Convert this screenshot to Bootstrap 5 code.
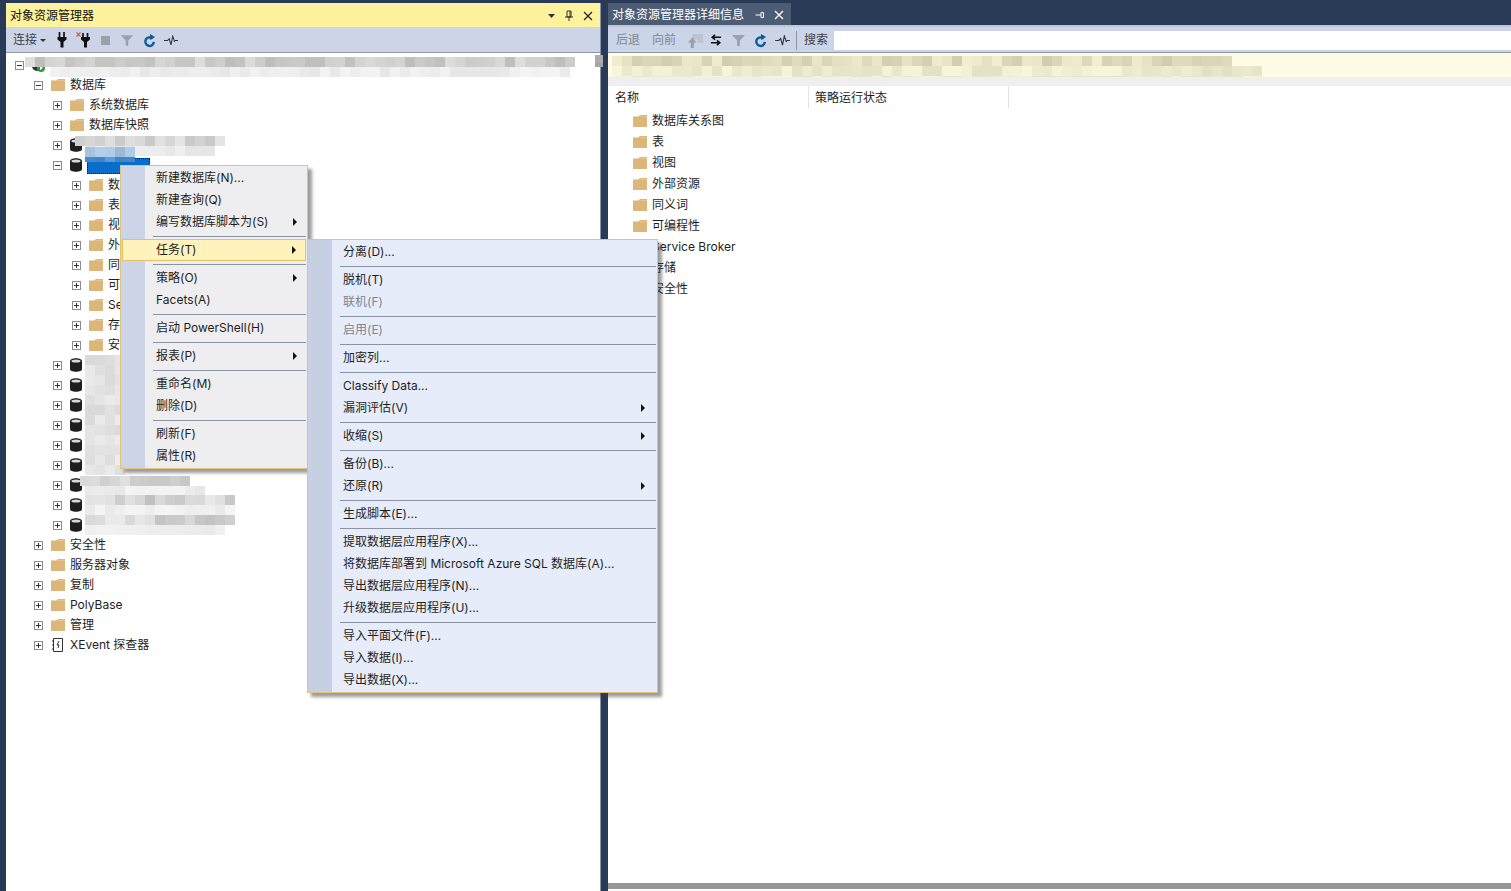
<!DOCTYPE html>
<html lang="zh-CN">
<head>
<meta charset="utf-8">
<title>对象资源管理器</title>
<link href="https://cdn.jsdelivr.net/npm/bootstrap@5.3.0/dist/css/bootstrap.min.css" rel="stylesheet">
<style>
html,body{height:100%;overflow:hidden}
body{background:#293a56;font:12px/20px "Inter","Noto Sans CJK SC",sans-serif;color:#1e1e1e;padding:3px 0 0 6px;position:relative}
.shell{height:888px;display:flex}
.pane-left{width:595px;flex:none;display:flex;flex-direction:column;background:#fff;border-right:1px solid #8a93a3}
.pane-right{margin-left:7px;flex:1;min-width:0;display:flex;flex-direction:column;background:#fff}
.title-yellow{height:24px;background:#fff29d;padding:2px 7px 0 4px;color:#111;flex:none}
.tabstrip{height:22px;display:flex;background:#293a56;flex:none}
.tab-active{width:183px;height:22px;background:#4b5c74;color:#fff;padding:2px 7px 0 4px;display:flex;align-items:center}
.tabgap{height:2px;background:#bcc7dc;flex:none}
.toolrow{height:26px;background:#ccd5e7;flex:none;border-bottom:1px solid #8f98a8;display:flex;align-items:center;padding-top:1px;padding-left:8px}
.toolrow-left{padding-left:7px}
.tool-txt{color:#3a3f4a}
.tool-off{color:#7d8694}
.caret-s{width:0;height:0;border:3px solid transparent;border-top-color:#333;border-bottom:0;margin-left:3px}
.tree{flex:1;padding-top:2px;overflow:hidden}
.tnode{height:20px;display:flex;align-items:center;white-space:nowrap}
.lv0{padding-left:9px}.lv1{padding-left:28px}.lv2{padding-left:47px}.lv3{padding-left:66px}
.xbox{width:9px;height:9px;flex:none;margin-right:8px;margin-top:1px}
.ic16{width:14px;height:14px;flex:none;margin-right:5px}
.lbl{line-height:20px}
.sel-name{width:63px;height:16px;background:#0a6ccb;outline:1px dotted #111;outline-offset:-1px;margin-left:-2px;margin-top:1px}
.notice-strip{height:24px;background:#fffbe4;flex:none}
.greygap{height:9px;background:#efeff2;flex:none}
.colhead{height:22px;flex:none;display:flex;margin-left:1px}
.colhead div{width:200px;padding:2px 6px 0;border-right:1px solid #e3e3e3}
.det-list{flex:1;padding-left:25px;padding-top:2px;overflow:hidden}
.det-row{height:21px;display:flex;align-items:center}
.hbar{height:6px;background:#979797;flex:none}
.hbar-end{height:2px;flex:none;background:#fff}
.search-box{height:19px;flex:1;border:0;border-radius:0;padding:0;min-height:0;background:#fff;margin-left:6px}
.vline{width:1px;height:19px;background:#8f98a8;margin:0 7px 0 6px}
.lt-plug{width:10px;height:16px;margin-left:11px}
.lt-unplug{width:14px;height:16px;margin-left:9px}
.lt-stop{width:9px;height:9px;margin-left:11px}
.lt-funnel{width:12px;height:13px;margin-left:11px}
.lt-refresh{width:13px;height:15px;margin-left:10px}
.lt-pulse{width:14px;height:11px;margin-left:8px}
.rt-next{margin-left:12px}
.rt-up{width:15px;height:15px;margin-left:12px}
.rt-swap{width:12px;height:12px;margin-left:7px}
.rt-funnel{width:13px;height:13px;margin-left:10px}
.rt-refresh{width:13px;height:15px;margin-left:9px}
.rt-pulse{width:15px;height:11px;margin-left:8px}
.ttl-tri{width:7px;height:4px}
.ttl-pin{width:10px;height:12px;margin-left:9px}
.ttl-x{width:10px;height:10px;margin-left:9px}
.tab-pin{width:10px;height:10px;margin-right:9px}
.tab-x{width:10px;height:10px;margin-right:0}
/* menus lie above the tree */
.ctx{--bs-dropdown-padding-y:0;position:absolute;margin:0;padding:0;border:1px solid #e3c27a;border-radius:0;box-shadow:4px 4px 3px rgba(60,60,60,.5);font-size:12px;z-index:20;min-width:0}
.ctx-a{left:120px;top:165px;width:188px;padding:1px 0;background:linear-gradient(90deg,#ccd5e7 24px,#eeeef0 24px)}
.ctx-b{left:307px;top:239px;width:351px;padding:1px 0;background:linear-gradient(90deg,#c7d0e3 24px,#e6ecfa 24px);z-index:21}
.ctx .dropdown-item{height:22px;line-height:21px;padding:0 0 0 35px;color:#1e1e1e;position:relative;background:none;border:0}
.ctx .dropdown-item.is-off{color:#7f8590}
.ctx .dropdown-item.is-hot{background:#fff2bb;outline:1px solid #e5c365;outline-offset:-1px;margin:0 1px;padding-left:34px;width:auto}
.ctx .sub::after{content:"";position:absolute;top:7px;border-left:4px solid #111;border-top:4px solid transparent;border-bottom:4px solid transparent}
.ctx-a .sub::after{right:10px}
.ctx-b .sub::after{right:12px}
.ctx .dropdown-divider{margin:0;height:6px;border:0;position:relative;opacity:1}
.ctx .dropdown-divider::after{content:"";position:absolute;top:3px;left:32px;right:1px;height:1px;background:#8a93a3}
.mosaic-patch{position:absolute;display:grid;z-index:5;filter:blur(.7px)}
.mosaic-patch i{display:block}
</style>
</head>
<body>
<svg width="0" height="0" class="position-absolute">
<defs>
<symbol id="folder" viewBox="0 0 14 14"><path d="M0 2.500h5l2-1.500h7v12H0z" fill="#dcb67a"/><path d="M0 3h5.500L7 2h7v1H0z" fill="#e6c58f"/></symbol>
<symbol id="dbcyl" viewBox="0 0 14 14"><path d="M0 3v8c0 1.700 2.700 2.800 6 2.800s6-1.100 6-2.800V3C12 1.300 9.300.2 6 .2S0 1.300 0 3z" fill="#1e1e1e"/><ellipse cx="6" cy="3" rx="4.600" ry="1.600" fill="#d9d9d9"/></symbol>
<symbol id="plus" viewBox="0 0 9 9"><rect x=".5" y=".5" width="8" height="8" fill="#fff" stroke="#8c8c8c"/><path d="M2 4.500h5M4.500 2v5" stroke="#333"/></symbol>
<symbol id="minus" viewBox="0 0 9 9"><rect x=".5" y=".5" width="8" height="8" fill="#fff" stroke="#8c8c8c"/><path d="M2 4.500h5" stroke="#333"/></symbol>
<symbol id="xev" viewBox="0 0 14 14"><path d="M2.500 .5h9v13h-9z" fill="#fff" stroke="#333"/><path d="M1 3h2M1 7h2M1 11h2" stroke="#333"/><path d="M8 3 6 7h2l-1 3" fill="none" stroke="#333"/></symbol>
<symbol id="plug" viewBox="0 0 10 16"><path d="M2.500 0v5M7 0v5" stroke="#111" stroke-width="1.700"/><path d="M.5 5h9v2.500l-3 2.500v5.500h-3V10l-3-2.500z" fill="#111"/></symbol>
<symbol id="unplug" viewBox="0 0 14 16"><path d="M.5 .5l4 4M4.500 .5l-4 4" stroke="#d9534f" stroke-width="1.100"/><path d="M7 1v4M11.500 1v4" stroke="#111" stroke-width="1.700"/><path d="M5 5h9v2.500L11 10v5.500H8V10L5 7.500z" fill="#111"/></symbol>
<symbol id="funnel" viewBox="0 0 14 14"><path d="M0 1h14L8.500 7v6h-3V7z" fill="#9aa1ac"/></symbol>
<symbol id="refresh" viewBox="0 0 14 15"><path d="M10.300 5.400A4.600 4.600 0 1 0 11.700 9" fill="none" stroke="#0e5a9c" stroke-width="2.600"/><path d="M7.500 .5v6.500l5.500-3.200z" fill="#0e5a9c"/></symbol>
<symbol id="pulse" viewBox="0 0 16 12"><path d="M0 6h4l2-2 2 7 2-10 2 6 1-1h3" fill="none" stroke="#333" stroke-width="1.200"/></symbol>
<symbol id="swap" viewBox="0 0 13 12"><path d="M12 3H3M5.500 .5 2.500 3l3 2.500M1 9h9M7.500 6.500l3 2.500-3 2.500" fill="none" stroke="#111" stroke-width="1.800"/></symbol>
<symbol id="uparrow" viewBox="0 0 14 14"><path d="M4 1h10v8H9V6H4z" fill="#bcc3ce"/><path d="M4 4 0 9h2.500v5h3V9H8z" fill="#9aa1ac"/></symbol>
<symbol id="pin" viewBox="0 0 10 10"><path d="M2 5h4M6 2.500v5h2.500v-5zM.5 5H2" fill="none" stroke="#fff"/></symbol>
<symbol id="pin-v" viewBox="0 0 10 12"><path d="M3 1h4v6H3zM1 7h8M5 7v4M6 1v6" fill="none" stroke="#333"/></symbol>
<symbol id="xmark" viewBox="0 0 10 10"><path d="M1 1l8 8M9 1 1 9" stroke="currentColor" stroke-width="1.300" fill="none"/></symbol>
</defs>
</svg>

<div class="shell">
  <section class="pane-left">
    <div class="title-yellow d-flex align-items-center">
      <span class="flex-grow-1">对象资源管理器</span>
      <svg class="ttl-tri" viewBox="0 0 7 4"><path d="M0 0h7L3.500 4z" fill="#333"/></svg>
      <svg class="ttl-pin"><use href="#pin-v"/></svg>
      <svg class="ttl-x text-dark"><use href="#xmark"/></svg>
    </div>
    <div class="toolrow toolrow-left">
      <span class="tool-txt">连接</span><span class="caret-s"></span>
      <svg class="lt-plug"><use href="#plug"/></svg>
      <svg class="lt-unplug"><use href="#unplug"/></svg>
      <svg class="lt-stop"><rect width="9" height="9" fill="#9aa1ac"/></svg>
      <svg class="lt-funnel"><use href="#funnel"/></svg>
      <svg class="lt-refresh"><use href="#refresh"/></svg>
      <svg class="lt-pulse"><use href="#pulse"/></svg>
    </div>
    <div class="tree">
      <div class="tnode lv0"><svg class="xbox"><use href="#minus"/></svg><svg class="ic16" viewBox="0 0 14 14"><ellipse cx="5" cy="8" rx="5" ry="5" fill="#333"/><circle cx="9" cy="10" r="4" fill="#2e9a3a"/><path d="M8 8v4l3-2z" fill="#fff"/></svg></div>
      <div class="tnode lv1"><svg class="xbox"><use href="#minus"/></svg><svg class="ic16"><use href="#folder"/></svg><span class="lbl">数据库</span></div>
      <div class="tnode lv2"><svg class="xbox"><use href="#plus"/></svg><svg class="ic16"><use href="#folder"/></svg><span class="lbl">系统数据库</span></div>
      <div class="tnode lv2"><svg class="xbox"><use href="#plus"/></svg><svg class="ic16"><use href="#folder"/></svg><span class="lbl">数据库快照</span></div>
      <div class="tnode lv2"><svg class="xbox"><use href="#plus"/></svg><svg class="ic16"><use href="#dbcyl"/></svg></div>
      <div class="tnode lv2"><svg class="xbox"><use href="#minus"/></svg><svg class="ic16"><use href="#dbcyl"/></svg><span class="sel-name"></span></div>
      <div class="tnode lv3"><svg class="xbox"><use href="#plus"/></svg><svg class="ic16"><use href="#folder"/></svg><span class="lbl">数据库关系图</span></div>
      <div class="tnode lv3"><svg class="xbox"><use href="#plus"/></svg><svg class="ic16"><use href="#folder"/></svg><span class="lbl">表</span></div>
      <div class="tnode lv3"><svg class="xbox"><use href="#plus"/></svg><svg class="ic16"><use href="#folder"/></svg><span class="lbl">视图</span></div>
      <div class="tnode lv3"><svg class="xbox"><use href="#plus"/></svg><svg class="ic16"><use href="#folder"/></svg><span class="lbl">外部资源</span></div>
      <div class="tnode lv3"><svg class="xbox"><use href="#plus"/></svg><svg class="ic16"><use href="#folder"/></svg><span class="lbl">同义词</span></div>
      <div class="tnode lv3"><svg class="xbox"><use href="#plus"/></svg><svg class="ic16"><use href="#folder"/></svg><span class="lbl">可编程性</span></div>
      <div class="tnode lv3"><svg class="xbox"><use href="#plus"/></svg><svg class="ic16"><use href="#folder"/></svg><span class="lbl">Service Broker</span></div>
      <div class="tnode lv3"><svg class="xbox"><use href="#plus"/></svg><svg class="ic16"><use href="#folder"/></svg><span class="lbl">存储</span></div>
      <div class="tnode lv3"><svg class="xbox"><use href="#plus"/></svg><svg class="ic16"><use href="#folder"/></svg><span class="lbl">安全性</span></div>
      <div class="tnode lv2"><svg class="xbox"><use href="#plus"/></svg><svg class="ic16"><use href="#dbcyl"/></svg></div>
      <div class="tnode lv2"><svg class="xbox"><use href="#plus"/></svg><svg class="ic16"><use href="#dbcyl"/></svg></div>
      <div class="tnode lv2"><svg class="xbox"><use href="#plus"/></svg><svg class="ic16"><use href="#dbcyl"/></svg></div>
      <div class="tnode lv2"><svg class="xbox"><use href="#plus"/></svg><svg class="ic16"><use href="#dbcyl"/></svg></div>
      <div class="tnode lv2"><svg class="xbox"><use href="#plus"/></svg><svg class="ic16"><use href="#dbcyl"/></svg></div>
      <div class="tnode lv2"><svg class="xbox"><use href="#plus"/></svg><svg class="ic16"><use href="#dbcyl"/></svg></div>
      <div class="tnode lv2"><svg class="xbox"><use href="#plus"/></svg><svg class="ic16"><use href="#dbcyl"/></svg></div>
      <div class="tnode lv2"><svg class="xbox"><use href="#plus"/></svg><svg class="ic16"><use href="#dbcyl"/></svg></div>
      <div class="tnode lv2"><svg class="xbox"><use href="#plus"/></svg><svg class="ic16"><use href="#dbcyl"/></svg></div>
      <div class="tnode lv1"><svg class="xbox"><use href="#plus"/></svg><svg class="ic16"><use href="#folder"/></svg><span class="lbl">安全性</span></div>
      <div class="tnode lv1"><svg class="xbox"><use href="#plus"/></svg><svg class="ic16"><use href="#folder"/></svg><span class="lbl">服务器对象</span></div>
      <div class="tnode lv1"><svg class="xbox"><use href="#plus"/></svg><svg class="ic16"><use href="#folder"/></svg><span class="lbl">复制</span></div>
      <div class="tnode lv1"><svg class="xbox"><use href="#plus"/></svg><svg class="ic16"><use href="#folder"/></svg><span class="lbl">PolyBase</span></div>
      <div class="tnode lv1"><svg class="xbox"><use href="#plus"/></svg><svg class="ic16"><use href="#folder"/></svg><span class="lbl">管理</span></div>
      <div class="tnode lv1"><svg class="xbox"><use href="#plus"/></svg><svg class="ic16"><use href="#xev"/></svg><span class="lbl">XEvent 探查器</span></div>
    </div>
  </section>

  <section class="pane-right">
    <div class="tabstrip"><div class="tab-active"><span class="flex-grow-1">对象资源管理器详细信息</span><svg class="tab-pin"><use href="#pin"/></svg><svg class="tab-x text-white"><use href="#xmark"/></svg></div></div>
    <div class="tabgap"></div>
    <div class="toolrow">
      <span class="tool-off">后退</span><span class="tool-off rt-next">向前</span>
      <svg class="rt-up"><use href="#uparrow"/></svg>
      <svg class="rt-swap"><use href="#swap"/></svg>
      <svg class="rt-funnel"><use href="#funnel"/></svg>
      <svg class="rt-refresh"><use href="#refresh"/></svg>
      <svg class="rt-pulse"><use href="#pulse"/></svg>
      <span class="vline"></span>
      <span class="tool-txt">搜索</span>
      <input class="form-control search-box" type="text" aria-label="搜索">
    </div>
    <div class="notice-strip"></div>
    <div class="greygap"></div>
    <div class="colhead"><div>名称</div><div>策略运行状态</div></div>
    <div class="det-list">
      <div class="det-row"><svg class="ic16"><use href="#folder"/></svg><span class="lbl">数据库关系图</span></div>
      <div class="det-row"><svg class="ic16"><use href="#folder"/></svg><span class="lbl">表</span></div>
      <div class="det-row"><svg class="ic16"><use href="#folder"/></svg><span class="lbl">视图</span></div>
      <div class="det-row"><svg class="ic16"><use href="#folder"/></svg><span class="lbl">外部资源</span></div>
      <div class="det-row"><svg class="ic16"><use href="#folder"/></svg><span class="lbl">同义词</span></div>
      <div class="det-row"><svg class="ic16"><use href="#folder"/></svg><span class="lbl">可编程性</span></div>
      <div class="det-row"><svg class="ic16"><use href="#folder"/></svg><span class="lbl">Service Broker</span></div>
      <div class="det-row"><svg class="ic16"><use href="#folder"/></svg><span class="lbl">存储</span></div>
      <div class="det-row"><svg class="ic16"><use href="#folder"/></svg><span class="lbl">安全性</span></div>
    </div>
    <div class="hbar"></div>
    <div class="hbar-end"></div>
  </section>
</div>

<ul class="dropdown-menu show ctx ctx-a list-unstyled">
  <li><a class="dropdown-item" href="#">新建数据库(N)...</a></li>
  <li><a class="dropdown-item" href="#">新建查询(Q)</a></li>
  <li><a class="dropdown-item sub" href="#">编写数据库脚本为(S)</a></li>
  <li><hr class="dropdown-divider"></li>
  <li><a class="dropdown-item sub is-hot" href="#">任务(T)</a></li>
  <li><hr class="dropdown-divider"></li>
  <li><a class="dropdown-item sub" href="#">策略(O)</a></li>
  <li><a class="dropdown-item" href="#">Facets(A)</a></li>
  <li><hr class="dropdown-divider"></li>
  <li><a class="dropdown-item" href="#">启动 PowerShell(H)</a></li>
  <li><hr class="dropdown-divider"></li>
  <li><a class="dropdown-item sub" href="#">报表(P)</a></li>
  <li><hr class="dropdown-divider"></li>
  <li><a class="dropdown-item" href="#">重命名(M)</a></li>
  <li><a class="dropdown-item" href="#">删除(D)</a></li>
  <li><hr class="dropdown-divider"></li>
  <li><a class="dropdown-item" href="#">刷新(F)</a></li>
  <li><a class="dropdown-item" href="#">属性(R)</a></li>
</ul>

<ul class="dropdown-menu show ctx ctx-b list-unstyled">
  <li><a class="dropdown-item" href="#">分离(D)...</a></li>
  <li><hr class="dropdown-divider"></li>
  <li><a class="dropdown-item" href="#">脱机(T)</a></li>
  <li><a class="dropdown-item is-off" href="#">联机(F)</a></li>
  <li><hr class="dropdown-divider"></li>
  <li><a class="dropdown-item is-off" href="#">启用(E)</a></li>
  <li><hr class="dropdown-divider"></li>
  <li><a class="dropdown-item" href="#">加密列...</a></li>
  <li><hr class="dropdown-divider"></li>
  <li><a class="dropdown-item" href="#">Classify Data...</a></li>
  <li><a class="dropdown-item sub" href="#">漏洞评估(V)</a></li>
  <li><hr class="dropdown-divider"></li>
  <li><a class="dropdown-item sub" href="#">收缩(S)</a></li>
  <li><hr class="dropdown-divider"></li>
  <li><a class="dropdown-item" href="#">备份(B)...</a></li>
  <li><a class="dropdown-item sub" href="#">还原(R)</a></li>
  <li><hr class="dropdown-divider"></li>
  <li><a class="dropdown-item" href="#">生成脚本(E)...</a></li>
  <li><hr class="dropdown-divider"></li>
  <li><a class="dropdown-item" href="#">提取数据层应用程序(X)...</a></li>
  <li><a class="dropdown-item" href="#">将数据库部署到 Microsoft Azure SQL 数据库(A)...</a></li>
  <li><a class="dropdown-item" href="#">导出数据层应用程序(N)...</a></li>
  <li><a class="dropdown-item" href="#">升级数据层应用程序(U)...</a></li>
  <li><hr class="dropdown-divider"></li>
  <li><a class="dropdown-item" href="#">导入平面文件(F)...</a></li>
  <li><a class="dropdown-item" href="#">导入数据(I)...</a></li>
  <li><a class="dropdown-item" href="#">导出数据(X)...</a></li>
</ul>

<div id="mosaics"></div>
<script>
/* Pixelated redaction patches: x,y,w,h,cell,[base rgb],spread */
const patches=[
 [25,57,550,10,10,[212,212,212],35],
 [50,67,525,10,10,[240,240,240],15],
 [75,136,150,10,10,[220,220,220],30],
 [85,146,130,10,10,[236,236,236],15],
 [85,147,50,10,10,[170,200,228],25],
 [85,157,50,5,10,[80,150,215],25],
 [85,355,40,100,10,[232,232,232],22],
 [85,455,40,20,10,[232,232,232],22],
 [80,476,115,10,10,[218,218,218],28],
 [85,486,120,9,10,[240,240,240],14],
 [85,495,150,10,10,[222,222,222],42],
 [85,505,150,10,10,[242,242,242],12],
 [85,515,150,10,10,[222,222,222],42],
 [85,525,140,10,10,[242,242,242],12],
 [595,55,15,12,8,[175,175,175],15],
 [612,56,625,10,10,[232,228,198],35],
 [612,66,650,11,10,[242,240,212],22]
];
let seed=7;const rnd=()=>(seed=(seed*16807)%2147483647)/2147483647;
const host=document.getElementById('mosaics');
patches.forEach(([x,y,w,h,c,b,d])=>{
  const el=document.createElement('div');el.className='mosaic-patch';
  el.style.cssText=`left:${x}px;top:${y}px;width:${w}px;height:${h}px;grid-template-columns:repeat(auto-fill,${c}px);grid-auto-rows:${c}px;overflow:hidden`;
  const n=Math.ceil(w/c)*Math.ceil(h/c);
  for(let i=0;i<n;i++){const s=document.createElement('i');const k=(rnd()-.3)*d;s.style.background=`rgb(${b.map(v=>Math.min(255,Math.round(v-k))).join(',')})`;el.appendChild(s);}
  host.appendChild(el);
});
</script>
</body>
</html>
